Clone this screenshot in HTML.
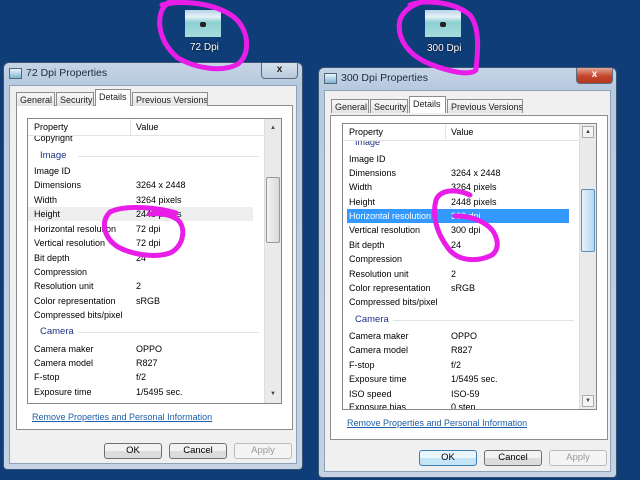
<!DOCTYPE html>
<html><head><meta charset="utf-8"><style>
*{margin:0;padding:0;box-sizing:border-box}
body{width:640px;height:480px;background:#0f3d78;position:relative;overflow:hidden;font-family:"Liberation Sans",sans-serif;font-size:9px;color:#000}
.win{position:absolute;border:1px solid #3b5370;border-radius:6px 6px 4px 4px;background:linear-gradient(#c6d5e6,#b7cadf 20px,#c3d3e4);}
.title{position:absolute;left:22px;top:4px;font-size:10.5px;color:#1b2b3c;white-space:nowrap}
.ticon{position:absolute;left:5px;top:5px;width:13px;height:11px;background:linear-gradient(#eaf3fa,#7fb6d2);border:1px solid #567}
.client{position:absolute;left:5px;top:22px;right:5px;bottom:5px;background:#f0f0f0;border:1px solid #8da2b8}
.tab{position:absolute;height:14px;border:1px solid #8d8d8d;border-bottom:none;background:linear-gradient(#f7f7f7,#e3e3e3);padding:2px 3px 0;font-size:9px;color:#222;white-space:nowrap;overflow:hidden}
.tab.sel{background:#fff;height:17px;padding-top:2px}
.panel{position:absolute;background:#fff;border:1px solid #8d8d8d}
.list{position:absolute;border:1px solid #828790;background:#fff;overflow:hidden}
.hdr{position:absolute;left:0;top:0;right:17px;height:17px;border-bottom:1px solid #e3e3e3;background:#fff;z-index:2}
.hdr span{position:absolute;top:3px}
.hdr i{position:absolute;left:102px;top:0;width:1px;height:17px;background:#e3e3e3}
.row{position:absolute;left:0;right:17px;height:14px;line-height:14px;white-space:nowrap}
.row .p{position:absolute;left:6px}
.row .v{position:absolute;left:108px}
.grp{position:absolute;left:12px;color:#1e3287;font-size:9.5px;height:14px;line-height:14px}
.gl{position:absolute;left:50px;right:22px;height:1px;background:#dde3ea}
.sb{position:absolute;right:0;top:0;width:17px;bottom:0;background:#eaeaea;border-left:1px solid #ddd}
.arr{position:absolute;left:2px;width:12px;height:12px;border:1px solid #aaa;background:#f4f4f4;font-size:6px;text-align:center;line-height:11px;color:#444}
.thumb{position:absolute;left:1px;width:14px;border:1px solid #999;border-radius:2px;background:linear-gradient(90deg,#f3f3f3,#d8d8d8)}
.link{position:absolute;left:22px;color:#1d5ea8;text-decoration:underline;font-size:9px;white-space:nowrap}
.btn{position:absolute;width:58px;height:16px;border:1px solid #707070;border-radius:3px;background:linear-gradient(#f2f2f2 50%,#dcdcdc 50%);text-align:center;line-height:14px;font-size:9.5px}
.btn.dis{color:#999;border-color:#bbb;background:#f4f4f4}
.close{position:absolute;top:0;width:37px;height:16px;border:1px solid #5a6a80;border-top:none;border-radius:0 0 4px 4px;text-align:center;color:#fff;font-weight:bold;font-size:10px;line-height:14px}
.ic{position:absolute;width:36px;height:27px;background:linear-gradient(#b9d3e8 0,#e8f2f8 25%,#8ed0d4 45%,#a7dcdc 100%)}
.ic b{position:absolute;left:15px;top:12px;width:6px;height:5px;background:#222;border-radius:2px}
.lbl{position:absolute;color:#fff;font-size:10px;text-shadow:0 0 2px #000}
</style></head><body>

<div class="ic" style="left:185px;top:10px"><b></b></div><div class="lbl" style="left:190px;top:42px">72 Dpi</div>
<div class="ic" style="left:425px;top:10px"><b></b></div><div class="lbl" style="left:427px;top:43px">300 Dpi</div>

<!-- Window 1 -->
<div class="win" style="left:3px;top:62px;width:300px;height:408px">
 <div class="ticon"></div><div class="title">72 Dpi Properties</div>
 <div class="close" style="left:257px;background:linear-gradient(#d8e2ee,#b9c9db);color:#222">x</div>
 <div class="client">
  <div class="panel" style="left:6px;top:19px;width:277px;height:325px"></div>
  <div class="tab" style="left:6px;top:6px;width:39px">General</div>
  <div class="tab" style="left:46px;top:6px;width:38px">Security</div>
  <div class="tab sel" style="left:85px;top:3px;width:36px">Details</div>
  <div class="tab" style="left:122px;top:6px;width:76px">Previous Versions</div>
  <div class="list" style="left:17px;top:32px;width:255px;height:286px">
   <div class="hdr"><span style="left:6px">Property</span><i></i><span style="left:108px">Value</span></div>
   <div class="row" style="top:12px"><span class="p">Copyright</span></div>
   <div class="grp" style="top:30px">Image</div><div class="gl" style="top:37px"></div>
   <div class="row" style="top:45px"><span class="p">Image ID</span></div>
   <div class="row" style="top:59px"><span class="p">Dimensions</span><span class="v">3264 x 2448</span></div>
   <div class="row" style="top:74px"><span class="p">Width</span><span class="v">3264 pixels</span></div>
   <div class="row" style="top:88px;background:#eeeeee;right:28px"><span class="p">Height</span><span class="v">2448 pixels</span></div>
   <div class="row" style="top:103px"><span class="p">Horizontal resolution</span><span class="v">72 dpi</span></div>
   <div class="row" style="top:117px"><span class="p">Vertical resolution</span><span class="v">72 dpi</span></div>
   <div class="row" style="top:132px"><span class="p">Bit depth</span><span class="v">24</span></div>
   <div class="row" style="top:146px"><span class="p">Compression</span></div>
   <div class="row" style="top:160px"><span class="p">Resolution unit</span><span class="v">2</span></div>
   <div class="row" style="top:175px"><span class="p">Color representation</span><span class="v">sRGB</span></div>
   <div class="row" style="top:189px"><span class="p">Compressed bits/pixel</span></div>
   <div class="grp" style="top:206px">Camera</div><div class="gl" style="top:213px"></div>
   <div class="row" style="top:223px"><span class="p">Camera maker</span><span class="v">OPPO</span></div>
   <div class="row" style="top:237px"><span class="p">Camera model</span><span class="v">R827</span></div>
   <div class="row" style="top:251px"><span class="p">F-stop</span><span class="v">f/2</span></div>
   <div class="row" style="top:266px"><span class="p">Exposure time</span><span class="v">1/5495 sec.</span></div>
   <div class="sb"><div class="arr" style="top:3px;border-color:transparent;background:none">▲</div><div class="thumb" style="top:58px;height:66px"></div><div class="arr" style="bottom:3px;border-color:transparent;background:none">▼</div></div>
  </div>
  <div class="link" style="top:326px">Remove Properties and Personal Information</div>
  <div class="btn" style="left:94px;top:357px">OK</div>
  <div class="btn" style="left:159px;top:357px">Cancel</div>
  <div class="btn dis" style="left:224px;top:357px">Apply</div>
 </div>
</div>

<!-- Window 2 -->
<div class="win" style="left:318px;top:67px;width:299px;height:411px">
 <div class="ticon"></div><div class="title">300 Dpi Properties</div>
 <div class="close" style="left:257px;background:linear-gradient(#e3a595,#c7452c 55%,#b23a20)">x</div>
 <div class="client">
  <div class="panel" style="left:5px;top:24px;width:278px;height:325px"></div>
  <div class="tab" style="left:6px;top:8px;width:38px">General</div>
  <div class="tab" style="left:45px;top:8px;width:38px">Security</div>
  <div class="tab sel" style="left:84px;top:5px;width:37px">Details</div>
  <div class="tab" style="left:122px;top:8px;width:76px">Previous Versions</div>
  <div class="list" style="left:17px;top:32px;width:255px;height:287px">
   <div class="hdr"><span style="left:6px">Property</span><i></i><span style="left:108px">Value</span></div>
   <div class="row" style="top:11px"><span class="p" style="left:12px;color:#1e3287">Image</span></div>
   <div class="row" style="top:28px"><span class="p">Image ID</span></div>
   <div class="row" style="top:42px"><span class="p">Dimensions</span><span class="v">3264 x 2448</span></div>
   <div class="row" style="top:56px"><span class="p">Width</span><span class="v">3264 pixels</span></div>
   <div class="row" style="top:71px"><span class="p">Height</span><span class="v">2448 pixels</span></div>
   <div class="row" style="top:85px;background:#3399ff;color:#fff;left:4px;right:27px"><span class="p" style="left:2px">Horizontal resolution</span><span class="v" style="left:104px">300 dpi</span></div>
   <div class="row" style="top:99px"><span class="p">Vertical resolution</span><span class="v">300 dpi</span></div>
   <div class="row" style="top:114px"><span class="p">Bit depth</span><span class="v">24</span></div>
   <div class="row" style="top:128px"><span class="p">Compression</span></div>
   <div class="row" style="top:143px"><span class="p">Resolution unit</span><span class="v">2</span></div>
   <div class="row" style="top:157px"><span class="p">Color representation</span><span class="v">sRGB</span></div>
   <div class="row" style="top:171px"><span class="p">Compressed bits/pixel</span></div>
   <div class="grp" style="top:189px">Camera</div><div class="gl" style="top:196px"></div>
   <div class="row" style="top:205px"><span class="p">Camera maker</span><span class="v">OPPO</span></div>
   <div class="row" style="top:219px"><span class="p">Camera model</span><span class="v">R827</span></div>
   <div class="row" style="top:234px"><span class="p">F-stop</span><span class="v">f/2</span></div>
   <div class="row" style="top:248px"><span class="p">Exposure time</span><span class="v">1/5495 sec.</span></div>
   <div class="row" style="top:263px"><span class="p">ISO speed</span><span class="v">ISO-59</span></div>
   <div class="row" style="top:276px"><span class="p">Exposure bias</span><span class="v">0 step</span></div>
   <div class="sb"><div class="arr" style="top:2px">▲</div><div class="thumb" style="top:65px;height:63px;background:linear-gradient(90deg,#e4f2fb,#b5d9f2);border-color:#5c8fb9"></div><div class="arr" style="bottom:2px">▼</div></div>
  </div>
  <div class="link" style="top:327px">Remove Properties and Personal Information</div>
  <div class="btn" style="left:94px;top:359px;border-color:#3c7fb1;background:linear-gradient(#eaf6fd 50%,#c4e5f6 50%)">OK</div>
  <div class="btn" style="left:159px;top:359px">Cancel</div>
  <div class="btn dis" style="left:224px;top:359px">Apply</div>
 </div>
</div>

<svg width="640" height="480" style="position:absolute;left:0;top:0" fill="none" stroke="#e81ee8" stroke-width="5" stroke-linecap="round" stroke-linejoin="round">
 <path d="M162,5 C180,0 215,2 235,18 C250,32 250,55 238,64 C222,73 195,68 178,58 C162,45 156,25 162,10 C166,3 172,0 175,0"/>
 <path d="M410,5 C425,-1 455,2 470,15 C480,28 478,50 476,70 C470,76 450,72 430,64 C408,55 396,38 400,20 C404,8 418,2 430,0"/>
 <path d="M176,213 C160,208 125,204 110,212 C100,222 104,238 118,247 C135,256 160,258 172,252 C184,244 186,228 178,220 C170,214 160,213 150,214"/>
 <path d="M470,195 C455,188 440,190 436,200 C432,215 436,232 448,248 C458,262 478,262 492,255 C502,247 496,232 488,226 C478,218 465,216 455,216"/>
</svg>
</body></html>
